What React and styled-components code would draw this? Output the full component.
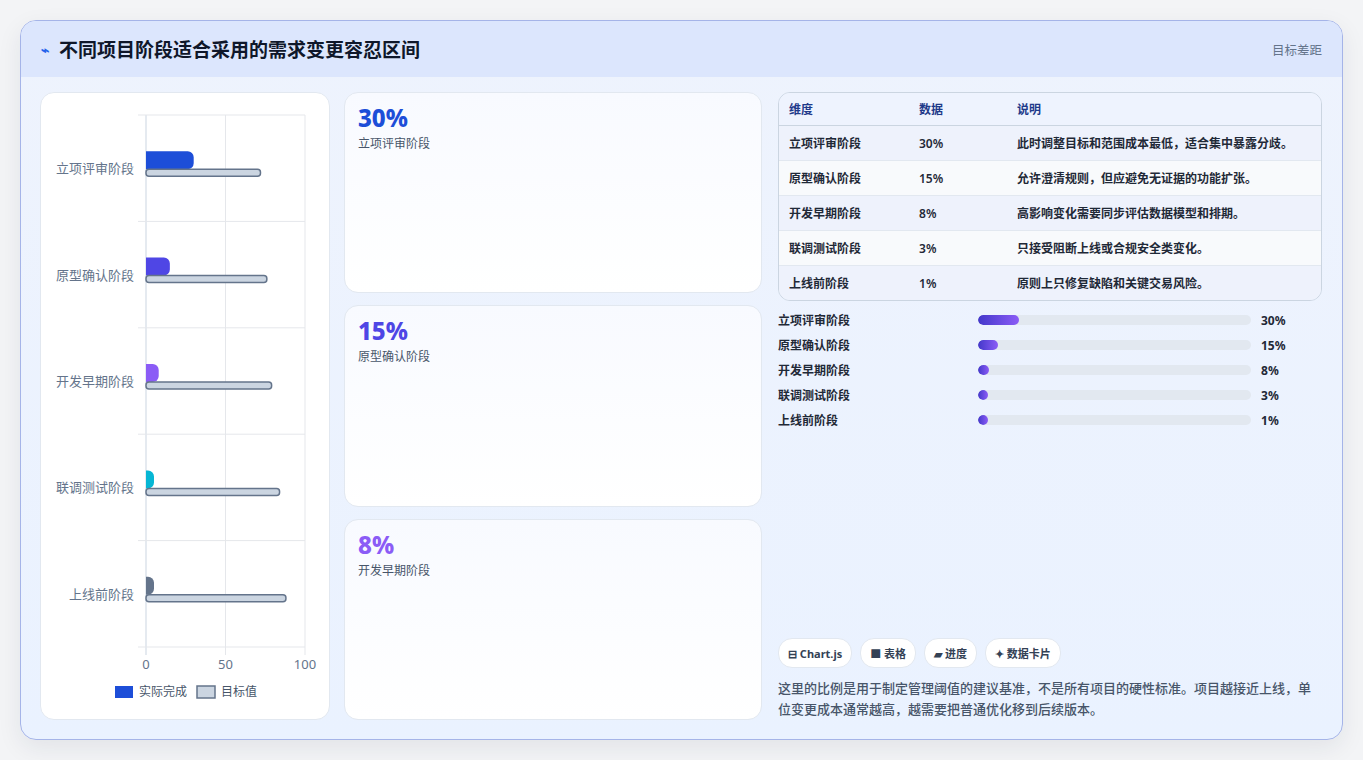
import React from 'react';
import styled, { createGlobalStyle } from 'styled-components';

const GlobalStyle = createGlobalStyle`
  html, body { margin: 0; background: #f3f4f6; }
  body { font-family: "Noto Sans", "Noto Sans CJK SC", sans-serif; }
`;

const stages = [
  { name: '立项评审阶段', value: 30, target: 72, color: '#1d4ed8', note: '此时调整目标和范围成本最低，适合集中暴露分歧。' },
  { name: '原型确认阶段', value: 15, target: 76, color: '#4f46e5', note: '允许澄清规则，但应避免无证据的功能扩张。' },
  { name: '开发早期阶段', value: 8, target: 79, color: '#8b5cf6', note: '高影响变化需要同步评估数据模型和排期。' },
  { name: '联调测试阶段', value: 3, target: 84, color: '#06b6d4', note: '只接受阻断上线或合规安全类变化。' },
  { name: '上线前阶段', value: 1, target: 88, color: '#64748b', note: '原则上只修复缺陷和关键交易风险。' },
];

function BarChart() {
  const x0 = 105, x1 = 264, y0 = 22, y1 = 554;
  const band = (y1 - y0) / 5;
  const sx = (v) => x0 + (v / 100) * (x1 - x0);
  const font = '"Noto Sans", "Noto Sans CJK SC", sans-serif';
  const r = 6, h = 18;
  return (
    <svg width="290" height="627" viewBox="0 0 290 627">
      {[0, 50, 100].map((t) => (
        <g key={t}>
          <line x1={sx(t)} x2={sx(t)} y1={y0} y2={y1 + 8} stroke={t === 0 ? '#cbd5e1' : '#e5e7eb'} />
          <text x={sx(t)} y={576} textAnchor="middle" fontSize="13" fill="#64748b" fontFamily={font}>{t}</text>
        </g>
      ))}
      {[0, 1, 2, 3, 4, 5].map((i) => (
        <line key={i} x1={x0 - 8} x2={x1} y1={y0 + band * i} y2={y0 + band * i} stroke="#e5e7eb" />
      ))}
      {stages.map((s, i) => {
        const c = y0 + band * i + band / 2;
        const w = Math.max(sx(s.value) - x0, 8);
        return (
          <g key={s.name}>
            <text x={x0 - 12} y={c + 5} textAnchor="end" fontSize="13" fill="#64748b" fontFamily={font}>{s.name}</text>
            <path d={`M${x0} ${c - 17} h${w - r} a${r} ${r} 0 0 1 ${r} ${r} v${h - 2 * r} a${r} ${r} 0 0 1 ${-r} ${r} h${-(w - r)} z`} fill={s.color} />
            <rect x={x0} y={c + 1} width={sx(s.target) - x0} height={7} rx={3} fill="#cbd5e1" stroke="#64748b" strokeWidth="1.5" />
          </g>
        );
      })}
      <rect x={74} y={593} width={18} height={12} fill="#1d4ed8" />
      <text x={98} y={603} fontSize="12" fill="#475569" fontFamily={font}>实际完成</text>
      <rect x={156} y={593} width={18} height={12} fill="#cbd5e1" stroke="#64748b" strokeWidth="1.5" />
      <text x={180} y={603} fontSize="12" fill="#475569" fontFamily={font}>目标值</text>
    </svg>
  );
}

export default function App() {
  return (
    <>
      <GlobalStyle />
      <Page>
        <Frame>
          <Header>
            <Title><Spark>⌁</Spark>不同项目阶段适合采用的需求变更容忍区间</Title>
            <HeaderNote>目标差距</HeaderNote>
          </Header>
          <Body>
            <ChartCard><BarChart /></ChartCard>
            <Cards>
              {stages.slice(0, 3).map((s) => (
                <StatCard key={s.name}>
                  <StatValue color={s.color}>{s.value}%</StatValue>
                  <StatLabel>{s.name}</StatLabel>
                </StatCard>
              ))}
            </Cards>
            <Side>
              <Table>
                <thead>
                  <tr><Th>维度</Th><Th>数据</Th><Th>说明</Th></tr>
                </thead>
                <tbody>
                  {stages.map((s, i) => (
                    <Tr key={s.name} odd={i % 2 === 1}>
                      <Td>{s.name}</Td><Td>{s.value}%</Td><Td>{s.note}</Td>
                    </Tr>
                  ))}
                </tbody>
              </Table>
              <Progress>
                {stages.map((s) => (
                  <ProgRow key={s.name}>
                    <ProgLabel>{s.name}</ProgLabel>
                    <Track><Fill style={{ width: `${Math.max(s.value / 2, 3.5)}%` }} /></Track>
                    <ProgValue>{s.value}%</ProgValue>
                  </ProgRow>
                ))}
              </Progress>
              <Spacer />
              <Chips>
                <Chip>⊟ Chart.js</Chip>
                <Chip>■ 表格</Chip>
                <Chip>▰ 进度</Chip>
                <Chip>✦ 数据卡片</Chip>
              </Chips>
              <Footnote>这里的比例是用于制定管理阈值的建议基准，不是所有项目的硬性标准。项目越接近上线，单位变更成本通常越高，越需要把普通优化移到后续版本。</Footnote>
            </Side>
          </Body>
        </Frame>
      </Page>
    </>
  );
}

const Page = styled.div`
  padding: 20px;
  height: 760px;
  box-sizing: border-box;
`;

const Frame = styled.div`
  width: 1323px;
  height: 720px;
  box-sizing: border-box;
  border: 1px solid #a5b4e8;
  border-radius: 16px;
  background: linear-gradient(180deg, #eef3fd 0%, #eaf2ff 100%);
  overflow: hidden;
  display: flex;
  flex-direction: column;
  box-shadow: 0 8px 24px rgba(30, 41, 59, 0.08);
`;

const Header = styled.div`
  height: 56px;
  flex: none;
  background: #dce6fd;
  display: flex;
  align-items: center;
  justify-content: space-between;
  padding: 0 20px;
`;

const Title = styled.h1`
  margin: 0;
  font-size: 19px;
  font-weight: 700;
  color: #0f172a;
  display: flex;
  align-items: center;
  gap: 10px;
`;

const Spark = styled.span`
  color: #2563eb;
  font-size: 14px;
`;

const HeaderNote = styled.span`
  font-size: 12.5px;
  color: #64748b;
`;

const Body = styled.div`
  flex: 1;
  display: grid;
  grid-template-columns: 290px 418px 546px;
  column-gap: 14px;
  padding: 15px 18px 19px 19px;
  min-height: 0;
  & > :nth-child(3) { margin-left: 2px; }
`;

const ChartCard = styled.div`
  background: #fff;
  border: 1px solid #e2e8f0;
  border-radius: 14px;
  overflow: hidden;
`;

const Cards = styled.div`
  display: grid;
  grid-template-rows: repeat(3, 1fr);
  gap: 12px;
`;

const StatCard = styled.div`
  border: 1px solid #e2e8f0;
  border-radius: 14px;
  background: linear-gradient(180deg, #f8faff 0%, #ffffff 100%);
  padding: 9px 13px;
`;

const StatValue = styled.div`
  font-size: 24px;
  font-weight: 800;
  color: ${(p) => p.color};
  line-height: 32px;
`;

const StatLabel = styled.div`
  font-size: 12px;
  color: #475569;
`;

const Side = styled.div`
  display: flex;
  flex-direction: column;
  min-height: 0;
`;

const Table = styled.table`
  width: 100%;
  border-collapse: separate;
  border-spacing: 0;
  border: 1px solid #cbd5e1;
  border-radius: 12px;
  overflow: hidden;
  font-size: 12px;
`;

const Th = styled.th`
  text-align: left;
  height: 32px;
  padding: 0 10px;
  color: #1e3a8a;
  font-weight: 700;
  border-bottom: 1px solid #cbd5e1;
  background: #eef3fe;
  &:nth-child(1) { width: 110px; }
  &:nth-child(2) { width: 78px; }
`;

const Tr = styled.tr`
  background: ${(p) => (p.odd ? '#f8fafc' : '#eef2fc')};
  &:not(:last-child) td { border-bottom: 1px solid #e2e8f0; }
`;

const Td = styled.td`
  height: 34px;
  padding: 0 10px;
  color: #1f2937;
  font-weight: 600;
`;

const Progress = styled.div`
  margin-top: 10px;
  display: flex;
  flex-direction: column;
  gap: 7px;
`;

const ProgRow = styled.div`
  display: grid;
  grid-template-columns: 190px 273px 1fr;
  align-items: center;
  gap: 10px;
  height: 18px;
  font-size: 12px;
  font-weight: 700;
`;

const ProgLabel = styled.span`
  color: #1f2937;
`;

const Track = styled.div`
  height: 10px;
  border-radius: 5px;
  background: #e2e8f0;
  overflow: hidden;
`;

const Fill = styled.div`
  height: 100%;
  border-radius: 5px;
  background: linear-gradient(90deg, #4338ca, #8b5cf6);
`;

const ProgValue = styled.span`
  color: #1f2937;
`;

const Spacer = styled.div`
  flex: 1;
`;

const Chips = styled.div`
  display: flex;
  gap: 8px;
`;

const Chip = styled.span`
  background: #fff;
  border: 1px solid #e2e8f0;
  border-radius: 14px;
  height: 28px;
  padding: 0 9px;
  display: flex;
  align-items: center;
  font-size: 11px;
  font-weight: 700;
  color: #334155;
`;

const Footnote = styled.p`
  margin: 10px 0 0;
  font-size: 13px;
  line-height: 21px;
  color: #475569;
  font-weight: 500;
`;
